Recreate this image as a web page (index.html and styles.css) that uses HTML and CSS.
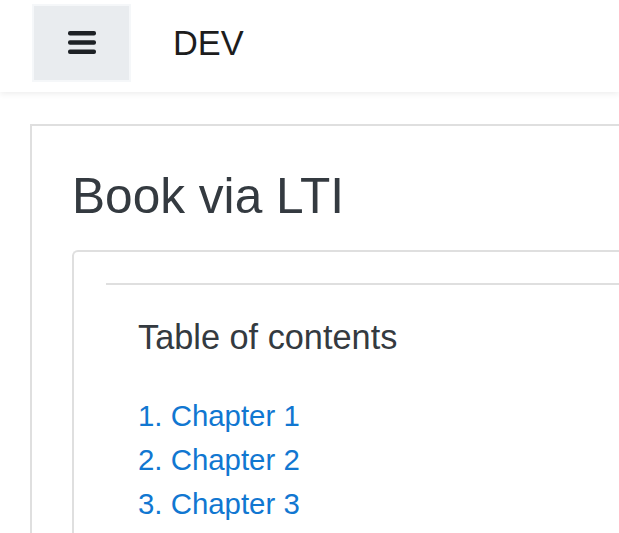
FILE: index.html
```
<!DOCTYPE html>
<html lang="en">
<head>
<meta charset="utf-8">
<title>Book via LTI</title>
<link rel="stylesheet" href="styles.css">
</head>
<body>
<header class="navbar">
  <button class="nav-toggle" type="button" aria-label="Side panel">
    <svg class="bars" width="28" height="24" viewBox="0 0 28 24" aria-hidden="true">
      <rect x="0" y="0" width="28" height="4.6" rx="2"/>
      <rect x="0" y="9.2" width="28" height="4.6" rx="2"/>
      <rect x="0" y="18.4" width="28" height="4.6" rx="2"/>
    </svg>
  </button>
  <span class="brand">DEV</span>
</header>
<main class="page">
  <section class="card">
    <h2 class="title">Book via LTI</h2>
    <div class="box">
      <hr class="rule">
      <div class="toc">
        <h4 class="toc-title">Table of contents</h4>
        <ul class="toc-list">
          <li><a href="#">1. Chapter 1</a></li>
          <li><a href="#">2. Chapter 2</a></li>
          <li><a href="#">3. Chapter 3</a></li>
        </ul>
      </div>
    </div>
  </section>
</main>
</body>
</html>
```
FILE: styles.css
```
html, body {
  margin: 0;
  padding: 0;
  background: #ffffff;
  overflow: hidden;
}
body {
  font-family: "Liberation Sans", Arial, sans-serif;
  color: #343a40;
  width: 619px;
  height: 533px;
}
.navbar {
  height: 92px;
  display: flex;
  align-items: flex-start;
  background: #ffffff;
  box-shadow: 0 2px 6px rgba(0, 0, 0, 0.07);
  position: relative;
  z-index: 1;
  box-sizing: border-box;
  padding-left: 32px;
  padding-top: 4px;
}
.nav-toggle {
  width: 99px;
  height: 78px;
  background: #e9ecef;
  border: 2px solid #f5f7f9;
  box-sizing: border-box;
  padding: 0;
  margin: 0;
  display: flex;
  align-items: center;
  justify-content: center;
}
.bars {
  display: block;
  fill: #1d2125;
  margin-left: 1px;
}
.brand {
  margin-left: 42px;
  font-size: 34.4px;
  line-height: 78px;
  color: #1d1d1d;
}
.page {
  padding: 32px 0 0 30px;
  height: 409px;
  overflow: hidden;
}
.card {
  border: 2px solid #dfdfdf;
  border-right: none;
  border-bottom: none;
  padding: 41px 0 0 40px;
  height: 420px;
}
.title {
  margin: 0 0 23.5px 0;
  font-size: 49.6px;
  line-height: 1.2;
  font-weight: 400;
  color: #343a40;
}
.box {
  border: 2px solid #dfdfdf;
  border-right: none;
  border-bottom: none;
  border-top-left-radius: 6px;
  padding: 31px 0 0 32px;
  height: 300px;
}
.rule {
  margin: 0;
  border: none;
  border-top: 2px solid #dfdfdf;
  height: 0;
}
.toc {
  padding: 32px 0 0 32px;
}
.toc-title {
  margin: 0 0 35.6px 0;
  font-size: 34.3px;
  line-height: 1.2;
  font-weight: 400;
  color: #343a40;
}
.toc-list {
  list-style: none;
  margin: 0;
  padding: 0;
}
.toc-list li {
  font-size: 29.4px;
  line-height: 44px;
}
.toc-list a {
  color: #1177d1;
  text-decoration: none;
}
```
